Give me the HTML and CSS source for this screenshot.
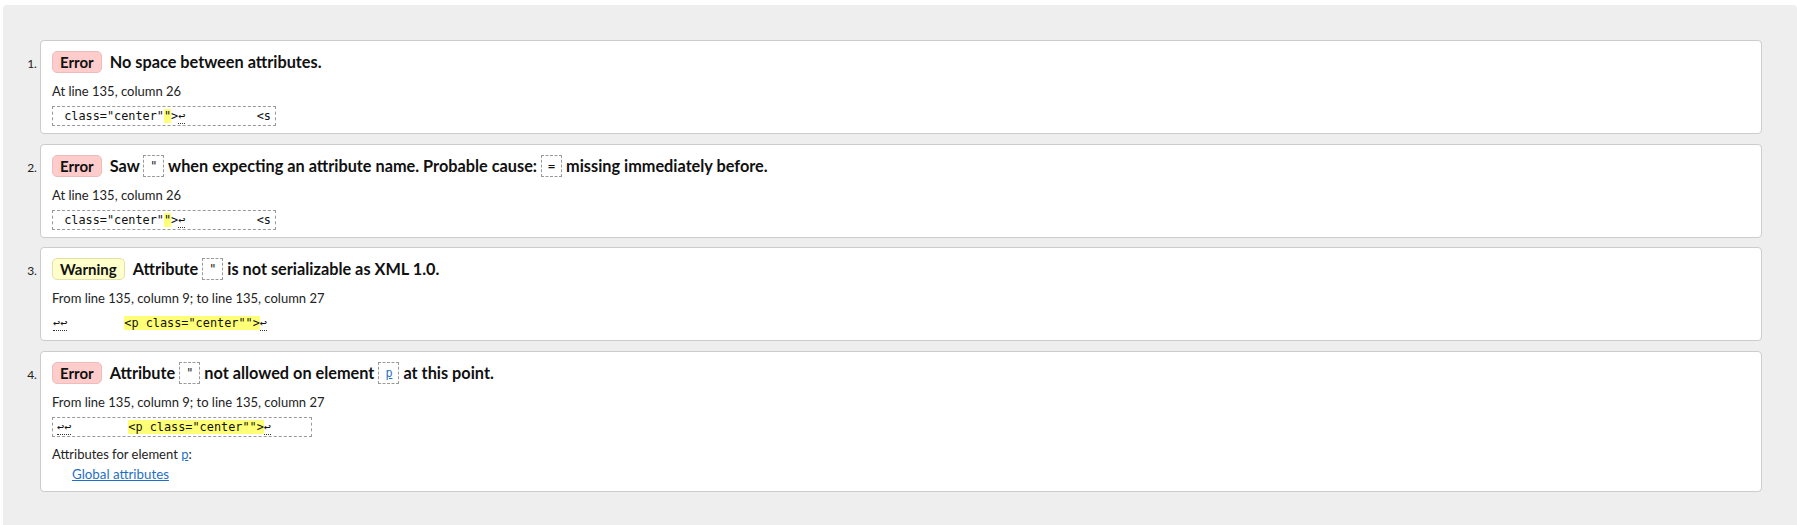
FILE: index.html
```html
<!DOCTYPE html>
<html lang="en">
<head>
<meta charset="utf-8">
<title>Validation results</title>
<link rel="stylesheet" href="styles.css">
</head>
<body>
<div class="results">
  <ol class="msgs">
    <li class="msg">
      <p class="head"><strong class="badge err">Error</strong><span class="txt">No space between attributes.</span></p>
      <p class="loc">At line 135, column 26</p>
      <p class="extract"><code class="box"> class="center"<b class="hl">"</b>&gt;<span class="lf">↩</span>          &lt;s</code></p>
    </li>
    <li class="msg">
      <p class="head"><strong class="badge err">Error</strong><span class="txt">Saw <code class="ic">"</code> when expecting an attribute name. Probable cause: <code class="ic">=</code> missing immediately before.</span></p>
      <p class="loc">At line 135, column 26</p>
      <p class="extract"><code class="box"> class="center"<b class="hl">"</b>&gt;<span class="lf">↩</span>          &lt;s</code></p>
    </li>
    <li class="msg">
      <p class="head"><strong class="badge warn">Warning</strong><span class="txt">Attribute <code class="ic">"</code> is not serializable as XML 1.0.</span></p>
      <p class="loc">From line 135, column 9; to line 135, column 27</p>
      <p class="extract"><code class="box plain"><span class="lf">↩↩</span>        <b class="hl">&lt;p class="center""&gt;</b><span class="lf">↩</span></code></p>
    </li>
    <li class="msg">
      <p class="head"><strong class="badge err">Error</strong><span class="txt">Attribute <code class="ic">"</code> not allowed on element <code class="ic"><a href="#p">p</a></code> at this point.</span></p>
      <p class="loc">From line 135, column 9; to line 135, column 27</p>
      <p class="extract"><code class="box"><span class="lf">↩↩</span>        <b class="hl">&lt;p class="center""&gt;</b><span class="lf">↩</span>     </code></p>
      <dl class="attrs">
        <dt>Attributes for element <a href="#p">p</a>:</dt>
        <dd><a href="#global">Global attributes</a></dd>
      </dl>
    </li>
  </ol>
</div>
</body>
</html>
```
FILE: styles.css
```css
html, body {
  margin: 0;
  padding: 0;
  background: #fff;
}

body {
  font-family: Lato, "Noto Sans", sans-serif;
  color: #111;
}

.results {
  margin: 5px 0 0 3px;
  background: #eeeeee;
  border-radius: 4px 4px 0 0;
  padding: 35px 35px 40px 37px;
}

.msgs {
  margin: 0;
  padding: 0;
  list-style: decimal outside;
}

.msg {
  background: #fff;
  border: 1px solid #cccccc;
  border-radius: 4px;
  padding: 10px 11px 7px;
  margin: 0 0 9.5px;
  font-size: 12px;
  color: #222;
}

.msg::marker {
  font-family: Lato, sans-serif;
  font-size: 12px;
  color: #222;
}

.head {
  margin: 0;
  height: 22px;
  line-height: 22px;
  font-size: 16.3px;
  font-weight: 700;
  color: #111;
  white-space: nowrap;
}

.badge {
  display: inline-block;
  vertical-align: top;
  box-sizing: border-box;
  height: 22px;
  line-height: 20px;
  padding: 0 7px;
  border: 1px solid;
  border-radius: 5px;
  font-size: 15px;
  font-weight: 700;
  color: #111;
  margin-right: 8px;
}

.badge.err {
  background: #ffcccc;
  border-color: #efbcbc;
}

.badge.warn {
  background: #ffffcc;
  border-color: #e2e2a8;
}

.ic {
  display: inline-block;
  vertical-align: top;
  box-sizing: border-box;
  height: 22px;
  line-height: 20px;
  padding: 0 6px;
  border: 1px dashed #9a9a9a;
  font-family: "DejaVu Sans Mono", monospace;
  font-size: 11.8px;
  font-weight: 400;
  color: #111;
}

.ic a {
  color: #1f6fc5;
}

.loc {
  margin: 9px 0 0;
  line-height: 18px;
  font-size: 13px;
  color: #222;
}

.extract {
  margin: 6px 0 0;
  height: 20px;
}

.box {
  display: inline-block;
  vertical-align: top;
  box-sizing: border-box;
  height: 20px;
  line-height: 18px;
  padding: 0 4px;
  border: 1px dashed #9a9a9a;
  font-family: "DejaVu Sans Mono", monospace;
  font-size: 11.85px;
  white-space: pre;
  color: #111;
}

.box.plain {
  border-color: transparent;
  padding: 0;
}

.hl {
  font-weight: 400;
  background: #ffff77;
}

.lf {
  border-bottom: 1px dotted #333;
}

.attrs {
  margin: 8px 0 0;
  font-size: 13px;
}

.attrs dt {
  line-height: 18px;
}

.attrs dd {
  margin: 1px 0 0 20px;
  line-height: 20px;
  font-size: 13.3px;
}

.attrs a {
  color: #1f6fc5;
  text-decoration: underline;
}
```
